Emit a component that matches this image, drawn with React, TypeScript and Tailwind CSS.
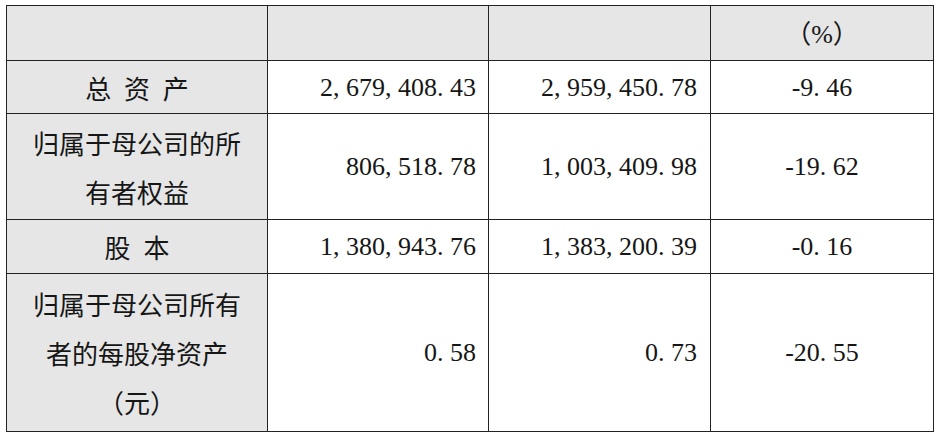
const rows = [
  { label: ['总 资 产'], a: '2, 679, 408. 43', b: '2, 959, 450. 78', pct: '-9. 46', h: 'h-[53px]' },
  { label: ['归属于母公司的所', '有者权益'], a: '806, 518. 78', b: '1, 003, 409. 98', pct: '-19. 62', h: 'h-[106px]' },
  { label: ['股 本'], a: '1, 380, 943. 76', b: '1, 383, 200. 39', pct: '-0. 16', h: 'h-[54px]' },
  { label: ['归属于母公司所有', '者的每股净资产', '（元）'], a: '0. 58', b: '0. 73', pct: '-20. 55', h: 'h-[158px]' },
];

const cjk = "font-['Noto_Sans_CJK_SC',sans-serif]";
const num = "font-['Liberation_Serif','Noto_Sans_CJK_SC',serif]";

export default function App() {
  return (
    <div className="h-[441px] w-[936px] bg-white pl-[6px] pt-[5px] text-[#161616]">
      <table className="w-[927px] table-fixed border-collapse text-[26px] leading-[49px]">
        <colgroup>
          <col className="w-[261px]" />
          <col className="w-[221px]" />
          <col className="w-[222px]" />
          <col className="w-[223px]" />
        </colgroup>
        <tbody>
          {/* Header */}
          <tr className="h-[55px] bg-[#e6e6e6]">
            <td className="border border-[#222] p-0" />
            <td className="border border-[#222] p-0" />
            <td className="border border-[#222] p-0" />
            <td className={`border border-[#222] p-0 text-center ${num}`}>
              <span className={cjk}>（</span>%<span className={cjk}>）</span>
            </td>
          </tr>

          {rows.map((row, i) => (
            <tr key={i} className={row.h}>
              <td className={`border border-[#222] bg-[#e6e6e6] p-0 text-center align-middle [word-spacing:7px] ${cjk}`}>
                {row.label.map((line, j) => (
                  <div key={j}>{line}</div>
                ))}
              </td>
              <td className={`border border-[#222] py-0 pl-0 pr-[12px] text-right align-middle ${num}`}>{row.a}</td>
              <td className={`border border-[#222] py-0 pl-0 pr-[13px] text-right align-middle ${num}`}>{row.b}</td>
              <td className={`border border-[#222] p-0 text-center align-middle ${num}`}>{row.pct}</td>
            </tr>
          ))}
        </tbody>
      </table>
    </div>
  );
}
